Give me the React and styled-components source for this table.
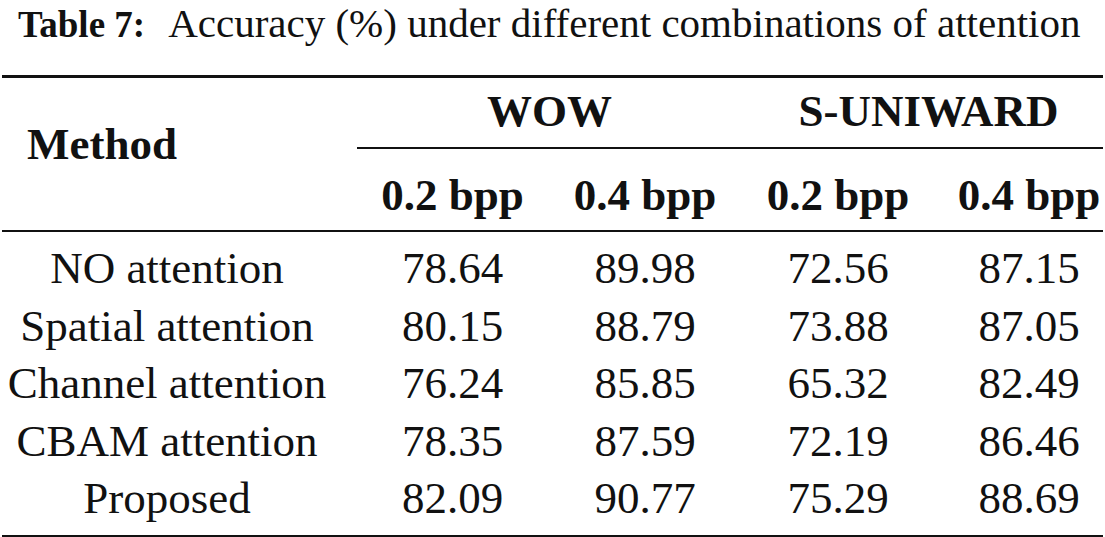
import React from "react";
import styled, { createGlobalStyle } from "styled-components";

const GlobalStyle = createGlobalStyle`
  html, body {
    margin: 0;
    padding: 0;
    background: #fff;
  }
  body {
    font-family: "Liberation Serif", "Times New Roman", serif;
    color: #111;
  }
`;

const COLS = "355px 191px 194px 192px 169px";

const Page = styled.div`
  width: 1105px;
  height: 537px;
  overflow: hidden;
`;

const Caption = styled.p`
  margin: 0 0 27px 18px;
  font-size: 41px;
  line-height: 46px;
  white-space: nowrap;
`;

const CaptionLabel = styled.b`
  font-size: 37px;
  margin-right: 23px;
`;

const Table = styled.div`
  margin-left: 2px;
  width: 1101px;
  border-top: 3px solid #111;
  border-bottom: 3px solid #111;
`;

const Head = styled.div`
  display: grid;
  grid-template-columns: ${COLS};
  border-bottom: 2px solid #111;
  font-size: 45px;
  font-weight: bold;
`;

const MethodHead = styled.div`
  grid-row: 1 / span 2;
  padding: 37px 0 0 25px;
  line-height: 58px;
  text-align: left;
`;

const GroupRow = styled.div`
  grid-column: 2 / span 4;
  display: grid;
  grid-template-columns: 385px 361px;
  padding-bottom: 3px;
  border-bottom: 2px solid #111;
`;

const GroupLabel = styled.div`
  line-height: 66px;
  text-align: center;
  padding-left: ${(p) => p.$shift || 0}px;
`;

const cellPad = (col) => {
  if (col === 0) return "padding-right: 25px;";
  if (col === 4) return "padding-left: 21px;";
  return "";
};

const SubHead = styled.div`
  padding-top: 17px;
  padding-bottom: 6px;
  line-height: 58px;
  text-align: center;
  white-space: nowrap;
  ${(p) => cellPad(p.$col)}
`;

const Body = styled.div`
  padding: 8px 0 7px;
`;

const Row = styled.div`
  display: grid;
  grid-template-columns: ${COLS};
  font-size: 45px;
  line-height: 57.5px;
`;

const Cell = styled.div`
  text-align: center;
  white-space: nowrap;
  ${(p) => cellPad(p.$col)}
`;

const rows = [
  ["NO attention", "78.64", "89.98", "72.56", "87.15"],
  ["Spatial attention", "80.15", "88.79", "73.88", "87.05"],
  ["Channel attention", "76.24", "85.85", "65.32", "82.49"],
  ["CBAM attention", "78.35", "87.59", "72.19", "86.46"],
  ["Proposed", "82.09", "90.77", "75.29", "88.69"],
];

const subHeads = ["0.2 bpp", "0.4 bpp", "0.2 bpp", "0.4 bpp"];

const App = () => {
  return (
    <Page>
      <GlobalStyle />
      <Caption>
        <CaptionLabel>Table 7:</CaptionLabel>
        Accuracy (%) under different combinations of attention
      </Caption>
      <Table>
        <Head>
          <MethodHead>Method</MethodHead>
          <GroupRow>
            <GroupLabel>WOW</GroupLabel>
            <GroupLabel $shift={12}>S-UNIWARD</GroupLabel>
          </GroupRow>
          {subHeads.map((s, i) => (
            <SubHead key={i} $col={i + 1}>
              {s}
            </SubHead>
          ))}
        </Head>
        <Body>
          {rows.map((r) => (
            <Row key={r[0]}>
              {r.map((v, i) => (
                <Cell key={i} $col={i}>
                  {v}
                </Cell>
              ))}
            </Row>
          ))}
        </Body>
      </Table>
    </Page>
  );
};

export default App;
